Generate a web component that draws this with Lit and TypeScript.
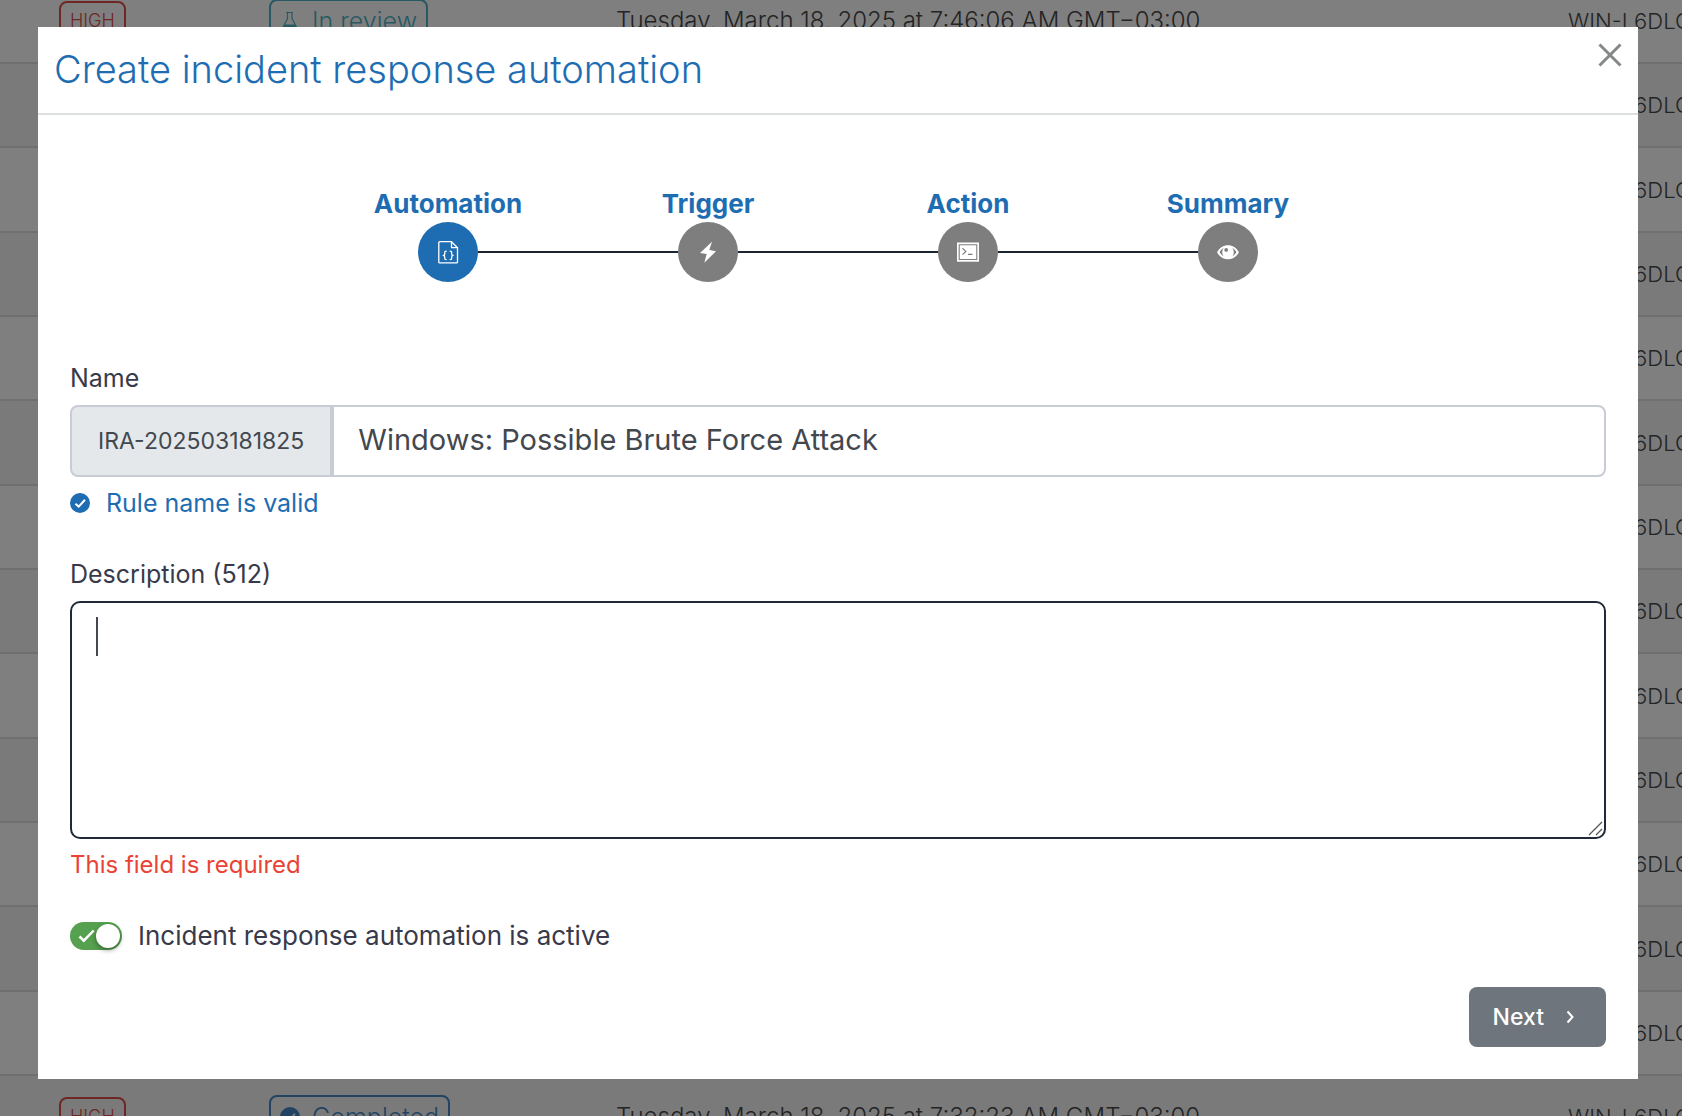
import { LitElement, html, css, svg, nothing, TemplateResult } from "lit";
import { customElement, state } from "lit/decorators.js";
import { classMap } from "lit/directives/class-map.js";

type Status = "In review" | "Completed";

interface Incident {
  severity?: string;
  status?: Status;
  date?: string;
  host: string;
}

const HOST = "WIN-L6DLG";

const incidents: Incident[] = [
  { severity: "HIGH", status: "In review", date: "Tuesday, March 18, 2025 at 7:46:06 AM GMT−03:00", host: HOST },
  ...Array.from({ length: 12 }, (): Incident => ({ host: HOST })),
  { severity: "HIGH", status: "Completed", date: "Tuesday, March 18, 2025 at 7:32:23 AM GMT−03:00", host: HOST },
];

const checkCircle = svg`
  <svg class="icon20" viewBox="0 0 20 20" aria-hidden="true">
    <circle cx="10" cy="10" r="10" fill="currentColor" />
    <path class="tick" d="M5.4 10.8 8.7 13.6 15 6.8" fill="none" stroke-width="2" />
  </svg>`;

const flask = svg`
  <svg class="icon20" viewBox="0 0 20 20" aria-hidden="true">
    <path d="M6 1.500h7M7.500 1.500v6L2 18.200h15.500L12 7.500v-6" fill="none" stroke="currentColor" stroke-width="1.200" />
    <path d="M5 13.500h9.500l3 5.200h-15.500z" fill="currentColor" />
  </svg>`;

@customElement("incident-table")
export class IncidentTable extends LitElement {
  static styles = css`
    :host {
      display: block;
      overflow: hidden;
      background: #fff;
      color: #484848;
      font: 300 24px/36px Inter, "Liberation Sans", sans-serif;
    }
    table {
      width: 100%;
      margin-top: -20px;
      border-collapse: separate;
      border-spacing: 0;
      table-layout: fixed;
    }
    .severity { width: 269px; }
    .status { width: 347px; }
    .host { width: 114px; }
    td {
      height: 82px;
      padding: 0;
      border-bottom: 2px solid #dedede;
      white-space: nowrap;
    }
    tr:nth-child(3n) td { height: 83px; }
    tr:nth-child(even) td { background: #f4f4f4; }
    td:first-child { padding-left: 59px; }
    td:last-child { font-size: 22px; }
    .badge {
      box-sizing: border-box;
      display: inline-flex;
      align-items: center;
      gap: 12px;
      height: 44px;
      padding: 0 9px;
      border: 2px solid currentColor;
      border-radius: 8px;
      font-size: 25px;
      vertical-align: middle;
    }
    .high {
      height: 40px;
      color: #dc4f49;
      font-size: 18px;
    }
    .review { color: #4fb3c6; }
    .completed { color: #4189c4; }
    .icon20 { width: 20px; height: 20px; flex: none; }
    .tick { stroke: #f4f4f4; }
  `;

  private status(status: Status): TemplateResult {
    const done = status === "Completed";
    return html`<span class="badge ${classMap({ completed: done, review: !done })}">${done ? checkCircle : flask}${status}</span>`;
  }

  render() {
    return html`
      <table>
        <colgroup>
          <col class="severity" /><col class="status" /><col /><col class="host" />
        </colgroup>
        <tbody>
          ${incidents.map((i) => html`
            <tr>
              <td>${i.severity ? html`<span class="badge high">${i.severity}</span>` : nothing}</td>
              <td>${i.status ? this.status(i.status) : nothing}</td>
              <td>${i.date ?? nothing}</td>
              <td>${i.host}</td>
            </tr>`)}
        </tbody>
      </table>`;
  }
}

const steps = [
  {
    label: "Automation",
    icon: svg`<g fill="none" stroke="#fff" stroke-width="1.300" stroke-linejoin="round" stroke-linecap="round">
      <path d="M3.800 1.700h11.700l6 6v14.200a1 1 0 0 1-1 1H3.800a1 1 0 0 1-1-1V2.700a1 1 0 0 1 1-1z" />
      <path d="M15.500 1.700v6h6" />
      <path d="M10.200 11.200c-1.600 0-1.400.6-1.400 2.200 0 1.200-.3 1.900-1.500 2 1.200.1 1.500.8 1.500 2 0 1.600-.2 2.200 1.400 2.200M14.200 11.200c1.600 0 1.400.6 1.400 2.200 0 1.200.3 1.900 1.500 2-1.200.1-1.500.8-1.500 2 0 1.600.2 2.200-1.400 2.200" />
    </g>`,
  },
  {
    label: "Trigger",
    icon: svg`<path d="M16 1.700 4 13l6.700 1-2.400 8.700L20 11.300l-6.700-1.300z" fill="#fff" />`,
  },
  {
    label: "Action",
    icon: svg`<path d="M1 2.500h22v19.200H1z" fill="#fff" />
      <path d="M3.200 4.700h17.600v14.800H3.200z" fill="none" stroke="#7e7e7e" stroke-width="1.100" />
      <path d="m6.500 8.200 3.300 3.200-3.300 3.200M12 14.400h4.500" fill="none" stroke="#7e7e7e" stroke-width="1.200" />`,
  },
  {
    label: "Summary",
    icon: svg`<path fill-rule="evenodd" fill="#fff" d="M1 12.300C3.600 7.600 7.500 5.200 12 5.200s8.400 2.400 11 7.100c-2.600 4.700-6.500 7-11 7s-8.400-2.300-11-7zm2.600 0c1 1.800 2.300 3.100 4 4-1.900-2.500-1.900-5.700 0-8.200-1.700.9-3 2.300-4 4.200zm12.800 4c1.700-.9 3-2.200 4-4-1-1.900-2.300-3.300-4-4.200 1.900 2.500 1.900 5.700 0 8.200zM10.200 8a1.900 1.900 0 1 0 0 3.800 1.900 1.900 0 0 0 0-3.800z" />`,
  },
];

@customElement("step-track")
export class StepTrack extends LitElement {
  static styles = css`
    :host { display: block; }
    ol {
      display: flex;
      justify-content: center;
      margin: 0;
      padding: 0;
      list-style: none;
    }
    li {
      flex: 0 1 260px;
      display: grid;
      justify-items: stretch;
      color: #1e6db2;
      font-size: 26px;
      font-weight: 700;
      line-height: 36px;
      text-align: center;
    }
    .rail { display: flex; align-items: center; }
    .rail::before,
    .rail::after {
      content: "";
      flex: 1;
      height: 2px;
      background: #1b2430;
    }
    li:first-child .rail::before,
    li:last-child .rail::after { background: transparent; }
    .dot {
      display: grid;
      place-items: center;
      width: 60px;
      height: 60px;
      border-radius: 50%;
      background: #7e7e7e;
    }
    .current { background: #1e6db2; }
    .glyph { width: 24px; height: 24px; }
  `;

  render() {
    return html`
      <ol>
        ${steps.map((s, i) => html`
          <li aria-current=${i === 0 ? "step" : nothing}>
            <span>${s.label}</span>
            <span class="rail">
              <span class="dot ${classMap({ current: i === 0 })}">
                <svg class="glyph" viewBox="0 0 24 24" aria-hidden="true">${s.icon}</svg>
              </span>
            </span>
          </li>`)}
      </ol>`;
  }
}

@customElement("app-root")
export class AppRoot extends LitElement {
  static styles = css`
    :host {
      display: block;
      position: relative;
      box-sizing: border-box;
      min-height: 100vh;
      padding: 27px 44px 37px 38px;
      font: 400 25px/36px Inter, "Liberation Sans", sans-serif;
      color: #383a4b;
    }
    *, *::before { box-sizing: border-box; }
    .behind, .shade { position: absolute; inset: 0; }
    .shade { background: rgba(0, 0, 0, 0.5); }
    .dialog { position: relative; background: #fff; }
    header {
      display: flex;
      align-items: center;
      justify-content: space-between;
      height: 88px;
      padding: 0 16px 2px;
      border-bottom: 2px solid #dde0e0;
    }
    h2 {
      margin: 0;
      color: #1e6db2;
      font-size: 38px;
      font-weight: 300;
      line-height: 48px;
    }
    button { border: 0; font: inherit; cursor: pointer; }
    .close {
      display: flex;
      align-self: flex-start;
      margin-top: 16px;
      padding: 0;
      background: none;
      color: #858888;
    }
    form {
      display: flex;
      flex-direction: column;
      padding: 71px 32px 32px;
    }
    .field {
      display: flex;
      flex-direction: column;
      margin-top: 35px;
    }
    .first { margin-top: 78px; }
    .field label { margin-bottom: 9px; }
    .group { display: flex; height: 72px; }
    .prefix {
      display: flex;
      align-items: center;
      padding: 0 26px;
      border: 2px solid #c8ccd5;
      border-radius: 8px 0 0 8px;
      background: #e4e8eb;
      color: #43484e;
      font-size: 23px;
    }
    input, textarea {
      margin: 0;
      outline: 0;
      background: #fff;
      color: #43484e;
      font: inherit;
    }
    .name {
      flex: 1;
      min-width: 0;
      padding: 0 24px 2px;
      border: 2px solid #c8ccd5;
      border-radius: 0 8px 8px 0;
      font-size: 29px;
    }
    .valid {
      display: flex;
      align-items: center;
      gap: 16px;
      margin-top: 8px;
      color: #1e6db2;
    }
    .tick { stroke: #fff; }
    .icon20 { width: 20px; height: 20px; }
    .area { position: relative; display: flex; }
    textarea {
      flex: 1;
      height: 238px;
      padding: 16px 24px;
      border: 2px solid #1f2937;
      border-radius: 10px;
      font-size: 29px;
      resize: none;
    }
    .caret {
      position: absolute;
      left: 26px;
      top: 16px;
      width: 2px;
      height: 39px;
      background: #43484e;
    }
    .grip {
      position: absolute;
      right: 3px;
      bottom: 3px;
      width: 15px;
      height: 15px;
    }
    .error { margin-top: 8px; color: #ea4335; font-size: 24px; }
    .active {
      display: flex;
      align-items: center;
      gap: 16px;
      margin-top: 35px;
      font-size: 26px;
    }
    .switch { position: relative; display: flex; }
    .switch input {
      appearance: none;
      display: flex;
      width: 52px;
      height: 28px;
      padding: 2px;
      border-radius: 14px;
      background: #a9adb3;
    }
    .switch input:checked { justify-content: flex-end; background: #56a14f; }
    .switch input::before {
      content: "";
      width: 24px;
      height: 24px;
      border-radius: 50%;
      background: #fff;
      box-shadow: 0 2px 5px rgba(0, 0, 0, 0.4);
    }
    .mark {
      position: absolute;
      left: 8px;
      top: 7px;
      width: 17px;
      height: 14px;
      pointer-events: none;
    }
    .next {
      display: flex;
      align-items: center;
      align-self: flex-end;
      gap: 20px;
      height: 60px;
      margin-top: 33px;
      padding: 0 30px 0 24px;
      border-radius: 8px;
      background: #6f757d;
      color: #fff;
      font-size: 23px;
      font-weight: 500;
    }
  `;

  @state() private active = true;

  render() {
    return html`
      <incident-table class="behind"></incident-table>
      <div class="shade"></div>
      <section class="dialog" role="dialog" aria-labelledby="title">
        <header>
          <h2 id="title">Create incident response automation</h2>
          <button class="close" type="button" aria-label="Close">
            <svg width="24" height="24" viewBox="0 0 24 24" aria-hidden="true">
              <path d="m1.500 1.500 21 21m0-21-21 21" stroke="currentColor" stroke-width="3" />
            </svg>
          </button>
        </header>
        <form @submit=${(e: Event) => e.preventDefault()}>
          <step-track></step-track>
          <div class="field first">
            <label for="name">Name</label>
            <div class="group">
              <span class="prefix">IRA-202503181825</span>
              <input class="name" id="name" type="text" .value=${"Windows: Possible Brute Force Attack"} />
            </div>
            <div class="valid">${checkCircle}<span>Rule name is valid</span></div>
          </div>
          <div class="field">
            <label for="description">Description (512)</label>
            <div class="area">
              <textarea id="description"></textarea>
              <span class="caret"></span>
              <svg class="grip" viewBox="0 0 15 15" aria-hidden="true">
                <path d="M1 14 14 1M8 14l6-6" stroke="#555" stroke-width="1.300" />
              </svg>
            </div>
            <div class="error">This field is required</div>
          </div>
          <div class="active">
            <span class="switch">
              <input id="active" type="checkbox" .checked=${this.active}
                @change=${(e: Event) => (this.active = (e.target as HTMLInputElement).checked)} />
              ${this.active ? html`<svg class="mark" viewBox="0 0 17 14" aria-hidden="true">
                <path d="m1.500 7.500 4.300 4.200L15.700 1.500" fill="none" stroke="#fff" stroke-width="2.500" />
              </svg>` : nothing}
            </span>
            <label for="active">Incident response automation is active</label>
          </div>
          <button class="next" type="submit">
            Next
            <svg width="12" height="14" viewBox="0 0 12 14" aria-hidden="true">
              <path d="m3.500 1.500 5 5.500-5 5.500" fill="none" stroke="currentColor" stroke-width="2" />
            </svg>
          </button>
        </form>
      </section>`;
  }
}
